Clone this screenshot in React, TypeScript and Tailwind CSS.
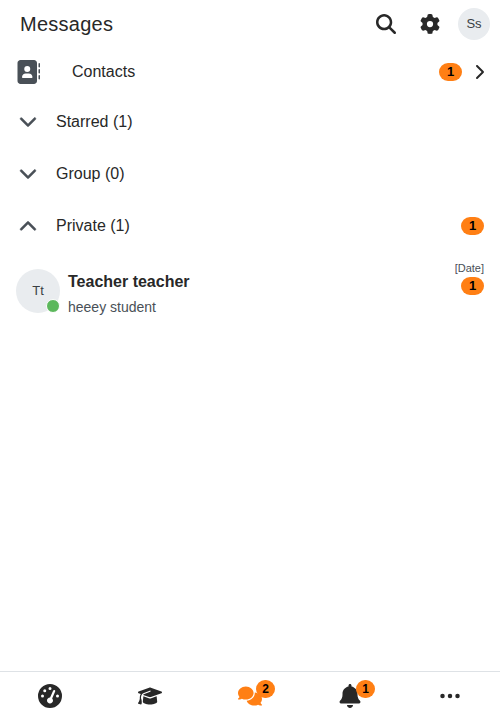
import type { ReactNode } from 'react';
import {
  FaMagnifyingGlass,
  FaGear,
  FaAddressBook,
  FaChevronRight,
  FaChevronDown,
  FaChevronUp,
  FaGaugeHigh,
  FaGraduationCap,
  FaComments,
  FaBell,
} from 'react-icons/fa6';

function Badge({ children }: { children: ReactNode }) {
  return (
    <span className="flex h-[18px] w-[23px] items-center justify-center rounded-[10px] bg-[#ff7f14] pb-px text-[13px] leading-none font-bold text-black">
      {children}
    </span>
  );
}

function Section({ label, open, badge }: { label: string; open?: boolean; badge?: string }) {
  return (
    <div className="flex h-[52px] items-center px-4">
      <span className="flex w-6 justify-center text-[#495057]">
        {open ? (
          <FaChevronUp size={18} strokeWidth={14} className="mt-[2px]" />
        ) : (
          <FaChevronDown size={18} strokeWidth={14} className="mb-[2px]" />
        )}
      </span>
      <span className="ml-4 flex-1">{label}</span>
      {badge && <Badge>{badge}</Badge>}
    </div>
  );
}

function MoreIcon() {
  return (
    <svg viewBox="0 0 512 512" className="size-6" fill="currentColor">
      <circle cx="96" cy="256" r="48" />
      <circle cx="256" cy="256" r="48" />
      <circle cx="416" cy="256" r="48" />
    </svg>
  );
}

function Tab({ children, badge }: { children: ReactNode; badge?: string }) {
  return (
    <div className="flex h-12 w-[100px] items-center justify-center">
      <div className="relative">
        {children}
        {badge && (
          <span className="absolute -top-1 left-[18px] flex h-[18px] w-[19px] items-center justify-center rounded-full bg-[#ff7f14] text-[12px] leading-none font-bold text-black">
            {badge}
          </span>
        )}
      </div>
    </div>
  );
}

export default function App() {
  return (
    <div className="flex h-[720px] w-[500px] flex-col overflow-hidden bg-white font-['Liberation_Sans',Arial,sans-serif] text-[16px] text-[#282828]">
      <header className="flex h-12 items-center pr-[10px] pl-5">
        <h1 className="flex-1 text-[20px] leading-6 tracking-[0.25px]">Messages</h1>
        <FaMagnifyingGlass size={20} />
        <FaGear size={20} className="ml-[23.5px]" />
        <span className="ml-[18.5px] flex size-8 items-center justify-center rounded-full bg-[#e9ecef] text-[13px] text-[#3a3f44]">
          Ss
        </span>
      </header>

      <div className="flex h-12 items-center px-4">
        <FaAddressBook size={24} className="text-[#495057]" />
        <span className="ml-8 flex-1">Contacts</span>
        <Badge>1</Badge>
        <FaChevronRight size={16} className="-mr-[3px] ml-[9px]" />
      </div>

      <Section label="Starred (1)" />
      <Section label="Group (0)" />
      <Section label="Private (1)" open badge="1" />

      <div className="flex h-[78px] items-center px-4">
        <div className="relative flex size-11 items-center justify-center rounded-full bg-[#e9ecef] text-[13px] text-[#3a3f44]">
          Tt
          <span className="absolute right-0 bottom-0 size-[14px] rounded-full border border-white bg-[#5cb85c]" />
        </div>
        <div className="ml-2 flex-1 pt-[5px]">
          <div className="text-[16px] leading-6 font-bold">Teacher teacher</div>
          <div className="mt-[3px] text-[14px] leading-[21px] text-[#495057]">heeey student</div>
        </div>
        <div className="mb-[28px] flex flex-col items-end">
          <span className="text-[11px] leading-[17px] text-[#495057]">[Date]</span>
          <Badge>1</Badge>
        </div>
      </div>

      <nav className="mt-auto flex h-[49px] border-t border-[#dee2e6]">
        <Tab>
          <FaGaugeHigh size={24} />
        </Tab>
        <Tab>
          <FaGraduationCap size={24} />
        </Tab>
        <Tab badge="2">
          <FaComments size={24} className="text-[#ff7f14]" />
        </Tab>
        <Tab badge="1">
          <FaBell size={24} />
        </Tab>
        <Tab>
          <MoreIcon />
        </Tab>
      </nav>
    </div>
  );
}
